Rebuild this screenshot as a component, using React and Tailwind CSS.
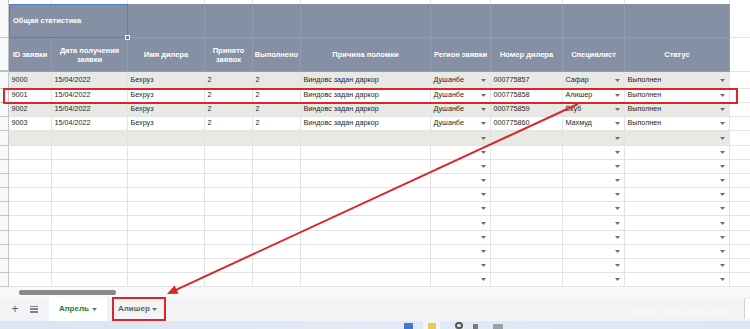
import React from 'react';

const COLS = ['w-[43px]', 'w-[76px]', 'w-[77px]', 'w-[48px]', 'w-[48px]', 'w-[130px]', 'w-[60px]', 'w-[72px]', 'w-[62px]', 'w-[105px]'];
const HEADS = ['ID заявки', 'Дата получения заявки', 'Имя дилера', 'Принято заявок', 'Выполнено', 'Причина поломки', 'Регион заявки', 'Номер дилера', 'Специалист', 'Статус'];
const DROPS = [6, 8, 9];

const ROWS = [
  { id: '9000', num: '000775857', who: 'Сафар', grey: true, h: 'h-[17px]' },
  { id: '9001', num: '000775858', who: 'Алишер', grey: false, h: 'h-[14px]' },
  { id: '9002', num: '000775859', who: 'Ёкуб', grey: true, h: 'h-[14px]' },
  { id: '9003', num: '000775860', who: 'Махмуд', grey: false, h: 'h-[14px]' },
];
const EMPTY = ['h-[15px]', 'h-[14px]', 'h-[14px]', 'h-[14px]', 'h-[14px]', 'h-[14px]', 'h-[15px]', 'h-[14px]', 'h-[14px]', 'h-[14px]', 'h-[14px]'];

function Caret() {
  return (
    <svg width="5" height="3" viewBox="0 0 5 3" className="shrink-0">
      <path d="M0 0h5L2.5 3z" fill="#6e6e6e" />
    </svg>
  );
}

function RowHead({ h }) {
  return <div className={`w-[9px] shrink-0 ${h} bg-[#f8f9fa] border-r border-b border-[#c4c7c5]`} />;
}

function DataRow({ cells, grey, h }) {
  return (
    <div className="flex">
      <RowHead h={h} />
      {COLS.map((w, i) => (
        <div
          key={i}
          className={`${w} ${h} shrink-0 flex items-center ${DROPS.includes(i) ? 'justify-between pr-[4px]' : ''} pl-[2.5px] border-r border-b border-[#e2e3e3] ${grey ? 'bg-[#e8e9e4]' : 'bg-white'} text-[7.2px] text-[#1f1f1f] whitespace-nowrap overflow-hidden`}
        >
          <span>{cells[i]}</span>
          {DROPS.includes(i) && <Caret />}
        </div>
      ))}
      <div className={`flex-1 ${h} border-b border-[#e2e3e3] bg-white`} />
    </div>
  );
}

export default function App() {
  return (
    <div className="relative w-[750px] h-[329px] overflow-hidden bg-white font-['Liberation_Sans',Arial,sans-serif]">
      {/* grid */}
      <div className="h-[287px] flex flex-col">
        <div className="flex h-[4px]">
          <div className="w-[9px] h-[4px] shrink-0 bg-[#f8f9fa] border-r border-[#c4c7c5]" />
          {COLS.map((w, i) => (
            <div key={i} className={`${w} h-[4px] shrink-0 border-r border-[#e2e3e3]`} />
          ))}
        </div>

        {/* header row 1 */}
        <div className="flex h-[34px]">
          <div className="w-[9px] h-[34px] shrink-0 bg-[#f8f9fa] border-r border-b border-[#c4c7c5]" />
          <div className="relative w-[119px] h-[34px] shrink-0 bg-[#8690a5] border border-[#4a7fd4] flex items-center pl-[3px] text-[7.5px] font-bold text-white">
            Общая статистика
            <div className="absolute right-[-3px] bottom-[-3px] w-[5px] h-[5px] bg-[#4a7fd4] border border-white" />
          </div>
          {COLS.slice(2).map((w, i) => (
            <div key={i} className={`${w} h-[34px] shrink-0 bg-[#8690a5] border-r border-b border-[#939cb0]`} />
          ))}
          <div className="flex-1 h-[34px] border-b border-[#e2e3e3]" />
        </div>

        {/* header row 2 */}
        <div className="flex h-[34px]">
          <div className="w-[9px] h-[34px] shrink-0 bg-[#f8f9fa] border-r border-b-2 border-[#bdbdbd]" />
          {COLS.map((w, i) => (
            <div
              key={i}
              className={`${w} h-[34px] shrink-0 bg-[#8690a5] border-r border-b border-[#939cb0] flex items-center justify-center text-center px-[1px] text-[7.5px] leading-[9px] font-bold text-white`}
            >
              {HEADS[i]}
            </div>
          ))}
          <div className="flex-1 h-[34px] border-b border-[#e2e3e3]" />
        </div>

        {ROWS.map((r) => (
          <DataRow
            key={r.id}
            grey={r.grey}
            h={r.h}
            cells={[r.id, '15/04/2022', 'Бехруз', '2', '2', 'Виндовс задан даркор', 'Душанбе', r.num, r.who, 'Выполнен']}
          />
        ))}
        {EMPTY.map((h, i) => (
          <DataRow key={i} grey={i === 0} h={h} cells={['', '', '', '', '', '', '', '', '', '']} />
        ))}
      </div>

      {/* horizontal scroll strip */}
      <div className="h-[10px] bg-[#f8f9fa] flex items-center pl-[19px]">
        <div className="w-[97px] h-[5px] rounded-[2px] bg-[#8a8a8a]" />
      </div>

      {/* sheet tabs */}
      <div className="h-[24px] bg-[#f1f3f4] flex items-stretch">
        <div className="w-[30px] flex items-center justify-center text-[12px] text-[#5f6368] leading-none">+</div>
        <div className="w-[19px] flex items-center">
          <div className="w-[8px] h-[7px] flex flex-col justify-between">
            <div className="h-[1.5px] bg-[#80868b]" />
            <div className="h-[1.5px] bg-[#80868b]" />
            <div className="h-[1.5px] bg-[#80868b]" />
          </div>
        </div>
        <div className="w-[58px] bg-white flex items-center justify-between pl-[10px] pr-[10px] text-[8px] font-bold text-[#188038]">
          Апрель
          <Caret />
        </div>
        <div className="w-[5px]" />
        <div className="w-[54px] border-2 border-[#d9262b] flex items-center justify-between pl-[4px] pr-[7px] text-[8px] font-bold text-[#5f6368]">
          Алишер
          <Caret />
        </div>
        <div className="flex-1" />
        <div className="w-[6px] my-[2px] bg-white border-l border-[#d0d0d0]" />
      </div>

      {/* taskbar */}
      <div className="h-[8px] bg-gradient-to-r from-[#dbe4f3] via-[#e4eaf6] to-[#dde6f4] flex items-start">
        <div className="ml-[404px] mt-[2px] w-[9px] h-[6px] bg-[#3d7bd6]" />
        <div className="ml-[10px] w-[17px] h-[8px] bg-[#f3f6fb] flex justify-center pt-[2px]">
          <div className="w-[8px] h-[6px] bg-[#f2c94c]" />
        </div>
        <div className="ml-[15px] mt-[1px] w-[8px] h-[7px] rounded-full border-2 border-[#555]" />
        <div className="ml-[10px] mt-[3px] w-[5px] h-[5px] bg-[#7a7a7a]" />
        <div className="ml-[15px] mt-[3px] w-[10px] h-[5px] bg-[#9aa0a6]" />
      </div>

      {/* watermark */}
      <div className="absolute left-[630px] top-[302px] text-[13px] tracking-[0.3px] text-white opacity-70">www.excelworld.ru</div>

      {/* annotation: red frame on row 9001 */}
      <div className="absolute left-[3px] top-[88px] w-[735px] h-[16px] border-2 border-[#d9262b] pointer-events-none" />

      {/* annotation: arrow */}
      <svg className="absolute inset-0 pointer-events-none" width="750" height="329" viewBox="0 0 750 329">
        <line x1="578" y1="104" x2="176" y2="289.8" stroke="#d9262b" strokeWidth="2" />
        <polygon points="167,294 178.5,293.8 174.6,285.4" fill="#d9262b" />
      </svg>
    </div>
  );
}
